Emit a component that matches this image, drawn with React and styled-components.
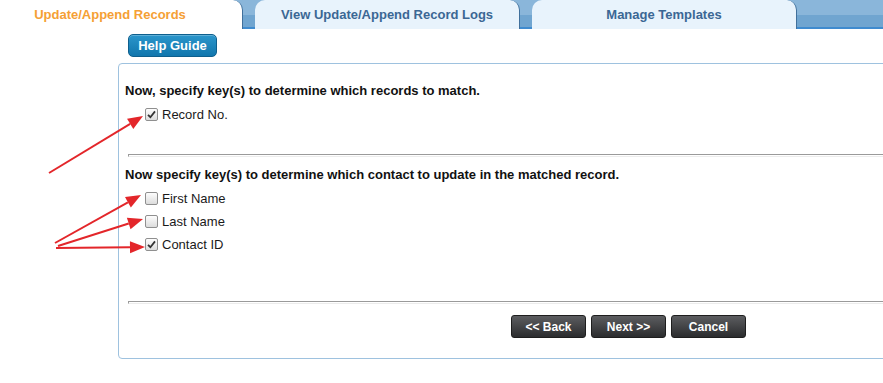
import React from "react";
import styled, { createGlobalStyle } from "styled-components";

const GlobalStyle = createGlobalStyle`
  html, body {
    margin: 0;
    padding: 0;
    background: #fff;
    overflow: hidden;
  }
  body {
    font-family: "Liberation Sans", Arial, sans-serif;
    color: #111;
  }
`;

const Page = styled.div`
  position: relative;
  width: 883px;
  height: 383px;
  overflow: hidden;
`;

const TabStrip = styled.div`
  display: flex;
  gap: 12px;
  height: 29px;
  margin-left: -22px;
  width: 960px;
  background: linear-gradient(
    to bottom,
    #8ab6da 0,
    #8ab6da 15px,
    #70a5d0 15px,
    #70a5d0 27px,
    #3f8bcf 27px
  );
`;

const Tab = styled.div`
  width: 265px;
  height: 29px;
  line-height: 29px;
  text-align: center;
  font-size: 13px;
  font-weight: bold;
  border-radius: 10px 10px 0 0;
  border-right: 1px solid #40709c;
  box-sizing: border-box;
  background: ${(p) => (p.$active ? "#fff" : "#e8f3fc")};
  color: ${(p) => (p.$active ? "#f5a034" : "#3b6794")};
`;

const Toolbar = styled.div`
  padding: 5px 0 0 128px;
  height: 29px;
  box-sizing: border-box;
`;

const HelpButton = styled.button`
  width: 89px;
  height: 23px;
  border: 1px solid #0e5f8d;
  border-radius: 5px;
  background: linear-gradient(to bottom, #2b96cb, #1176ad);
  color: #fff;
  font-family: "Liberation Sans", Arial, sans-serif;
  font-size: 13px;
  font-weight: bold;
  padding: 0;
  box-shadow: inset 0 1px 0 rgba(255, 255, 255, 0.25);
`;

const Panel = styled.div`
  margin: 5px 0 0 118px;
  width: 820px;
  height: 296px;
  box-sizing: border-box;
  border: 1px solid #9ec2df;
  border-radius: 4px 0 0 4px;
  padding: 19px 0 0 6px;
`;

const Heading = styled.div`
  font-size: 13px;
  font-weight: bold;
  line-height: 16px;
  margin-bottom: 4px;
`;

const OptionRow = styled.label`
  display: flex;
  align-items: center;
  gap: 4px;
  height: 23px;
  margin-left: 20px;
  font-size: 13px;
  color: #1a1a1a;
`;

const Box = styled.span`
  width: 11px;
  height: 11px;
  border: 1px solid #8f8f8f;
  border-radius: 2px;
  background: linear-gradient(to bottom, #fdfdfd, #dcdcdc);
  display: flex;
  align-items: center;
  justify-content: center;
`;

const Rule = styled.div`
  height: 1px;
  margin: ${(p) => p.$top}px 0 10px 3px;
  border-top: 1px solid #9a9a9a;
  border-left: 1px solid #9a9a9a;
  border-bottom: 1px solid #ececec;
`;

const ButtonBar = styled.div`
  display: flex;
  gap: 5px;
  padding-left: 386px;
  margin-top: 11px;
`;

const NavButton = styled.button`
  width: 75px;
  height: 23px;
  padding: 0;
  border: 1px solid #1e1e1e;
  border-radius: 3px;
  background: linear-gradient(to bottom, #5c5d60, #2b2c2e);
  color: #fff;
  font-family: "Liberation Sans", Arial, sans-serif;
  font-size: 12px;
  font-weight: bold;
`;

const Overlay = styled.svg`
  position: absolute;
  top: 0;
  left: 0;
  pointer-events: none;
`;

const Check = ({ checked }) => (
  <Box>
    {checked && (
      <svg width="9" height="9" viewBox="0 0 9 9">
        <path d="M1 4.8 L3.4 7.2 L8 1.4" fill="none" stroke="#333" strokeWidth="1.8" />
      </svg>
    )}
  </Box>
);

const Option = ({ label, checked }) => (
  <OptionRow>
    <Check checked={checked} />
    {label}
  </OptionRow>
);

const arrows = [
  [49, 173, 143, 116],
  [55, 243, 141, 195],
  [58, 246, 143, 219],
  [56, 248, 145, 247],
];

const Arrow = ({ x1, y1, x2, y2 }) => {
  const dx = x2 - x1;
  const dy = y2 - y1;
  const len = Math.hypot(dx, dy);
  const ux = dx / len;
  const uy = dy / len;
  const bx = x2 - ux * 15;
  const by = y2 - uy * 15;
  const pts = [
    [x2, y2],
    [bx - uy * 6, by + ux * 6],
    [bx + uy * 6, by - ux * 6],
  ];
  return (
    <g>
      <line x1={x1} y1={y1} x2={bx} y2={by} stroke="#e3262a" strokeWidth="2" />
      <polygon points={pts.map((p) => p.join(",")).join(" ")} fill="#e3262a" />
    </g>
  );
};

export default function App() {
  return (
    <Page>
      <GlobalStyle />
      <TabStrip>
        <Tab $active>Update/Append Records</Tab>
        <Tab>View Update/Append Record Logs</Tab>
        <Tab>Manage Templates</Tab>
      </TabStrip>
      <Toolbar>
        <HelpButton>Help Guide</HelpButton>
      </Toolbar>
      <Panel>
        <Heading>Now, specify key(s) to determine which records to match.</Heading>
        <Option label="Record No." checked />
        <Rule $top={28} />
        <Heading>Now specify key(s) to determine which contact to update in the matched record.</Heading>
        <Option label="First Name" />
        <Option label="Last Name" />
        <Option label="Contact ID" checked />
        <Rule $top={45} />
        <ButtonBar>
          <NavButton>&lt;&lt; Back</NavButton>
          <NavButton>Next &gt;&gt;</NavButton>
          <NavButton>Cancel</NavButton>
        </ButtonBar>
      </Panel>
      <Overlay width="883" height="383">
        {arrows.map(([x1, y1, x2, y2], i) => (
          <Arrow key={i} x1={x1} y1={y1} x2={x2} y2={y2} />
        ))}
      </Overlay>
    </Page>
  );
}
